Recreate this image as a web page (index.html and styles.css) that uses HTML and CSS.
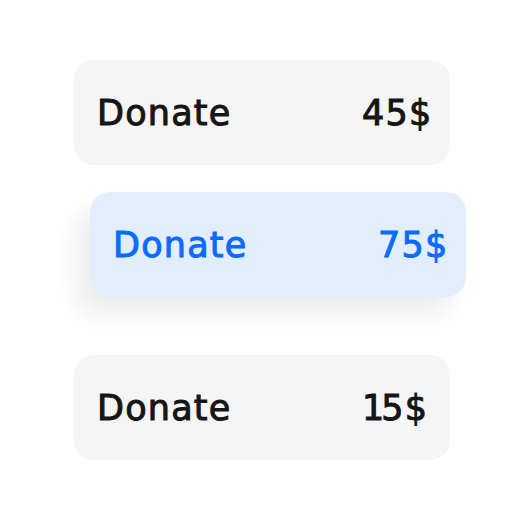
FILE: index.html
```html
<!DOCTYPE html>
<html>
<head>
<meta charset="utf-8">
<link rel="stylesheet" href="styles.css">
</head>
<body>
<div class="list">
  <div class="card"><span class="label">Donate</span><span class="price">45$</span></div>
  <div class="card card-active"><span class="label">Donate</span><span class="price">75$</span></div>
  <div class="card card-last"><span class="label">Donate</span><span class="price"><span class="narrow">1</span>5$</span></div>
</div>
</body>
</html>
```
FILE: styles.css
```css
html, body {
  margin: 0;
  padding: 0;
  background: #ffffff;
}
.list {
  display: flex;
  flex-direction: column;
  align-items: flex-start;
  padding: 60px 0 0 74px;
}
.card {
  box-sizing: border-box;
  width: 376px;
  height: 105px;
  border-radius: 20px;
  background: #f5f5f5;
  display: grid;
  grid-template-columns: 265px auto;
  align-items: center;
  padding-left: 23px;
  font-family: "DejaVu Sans", sans-serif;
  font-weight: 400;
  font-size: 35px;
  letter-spacing: 1.2px;
  -webkit-text-stroke: 1px currentColor;
  color: #151515;
}
.card-active {
  margin-top: 27px;
  margin-left: 16px;
  background: #e2eefe;
  color: #0a6cff;
  box-shadow: -14px 18px 22px rgba(0, 0, 0, 0.07);
}
.card-last {
  margin-top: 58px;
}
.label, .price {
  line-height: 1;
  padding-top: 2px;
}
.narrow {
  letter-spacing: -3px;
}
```
